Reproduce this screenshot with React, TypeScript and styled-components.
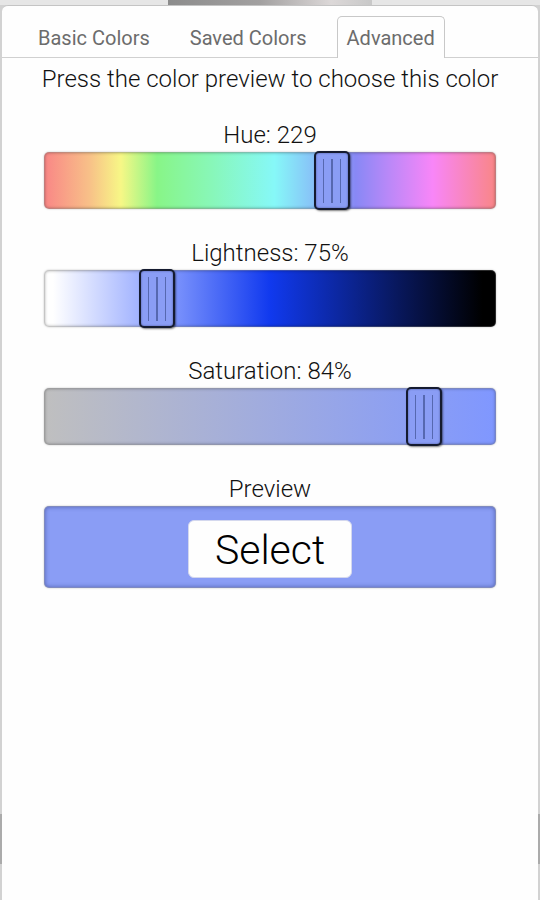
import React, { useState } from "react";
import styled, { createGlobalStyle, css } from "styled-components";

const GlobalStyle = createGlobalStyle`
  * { box-sizing: border-box; }
  body {
    margin: 0;
    font-family: Roboto, "Liberation Sans", sans-serif;
    color: #111;
    background: #e6e6e6;
  }
`;

const Backdrop = styled.div`
  min-height: 100vh;
  display: flex;
  padding: 5px 2px 0;
  background:
    linear-gradient(90deg, #8c8c8c, #a2a0a0 45%, #dcd8d8 80%, #c8c8c8) 50% 0 / 204px 6px no-repeat,
    linear-gradient(#ababab, #ababab) 0 814px / 100% 50px no-repeat,
    linear-gradient(#e6e6e6, #e6e6e6) 0 0 / 100% 5px no-repeat,
    #d2d2d2;
`;

const Dialog = styled.main`
  flex: 1;
  min-width: 0;
  background: #fefefe;
  border-top: 1px solid #c4c4c4;
  border-radius: 6px 6px 0 0;
`;

const TabList = styled.div`
  display: flex;
  align-items: flex-end;
  gap: 20px;
  height: 52px;
  padding: 0 26px;
  border-bottom: 1px solid #d0d0d0;
`;

const Tab = styled.button<{ $active?: boolean }>`
  height: 42px;
  margin: 0 0 -1px;
  padding: 0 9px;
  border: 1px solid transparent;
  border-bottom: 0;
  border-radius: 5px 5px 0 0;
  background: transparent;
  color: #6c6c6c;
  font: 400 20px/40px Roboto, "Liberation Sans", sans-serif;
  white-space: nowrap;
  cursor: pointer;
  ${(p) =>
    p.$active &&
    css`
      background: #fefefe;
      border-color: #c8c8c8;
    `}
`;

const Panel = styled.section`
  display: flex;
  flex-direction: column;
  padding: 6px 42px 0;
`;

const Hint = styled.p`
  align-self: center;
  margin: 0 0 26px;
  font-size: 24px;
  font-weight: 300;
  line-height: 30px;
  white-space: nowrap;
`;

const Field = styled.div`
  display: flex;
  flex-direction: column;
  gap: 2px;
  margin-bottom: 29px;
`;

const Label = styled.label`
  text-align: center;
  font-size: 24px;
  font-weight: 300;
  line-height: 30px;
`;

const Track = styled.div<{ $fill: string }>`
  display: flex;
  height: 57px;
  border: 1px solid rgba(110, 110, 110, 0.4);
  border-radius: 5px;
  background: ${(p) => p.$fill} border-box;
  box-shadow: inset 0 0 3px rgba(0, 0, 0, 0.3), 0 0 2px rgba(0, 0, 0, 0.25);
`;

const thumb = css`
  box-sizing: border-box;
  width: 36px;
  height: 59px;
  border: 2px solid #151b30;
  border-radius: 5px;
  background:
    linear-gradient(#5668b0, #5668b0) 7px 50% / 1px 44px no-repeat,
    linear-gradient(#5668b0, #5668b0) 15px 50% / 2px 44px no-repeat,
    linear-gradient(#5668b0, #5668b0) 24px 50% / 1px 44px no-repeat,
    var(--chosen);
  box-shadow: inset 0 0 2px rgba(20, 30, 80, 0.6), 1px 1px 2px rgba(0, 0, 0, 0.5);
`;

const Slider = styled.input<{ $reversed?: boolean }>`
  appearance: none;
  flex: 1;
  min-width: 0;
  height: 59px;
  margin: -2px -19px;
  background: transparent;
  direction: ${(p) => (p.$reversed ? "rtl" : "ltr")};
  cursor: pointer;
  &::-webkit-slider-thumb {
    appearance: none;
    ${thumb}
  }
  &::-moz-range-thumb {
    ${thumb}
  }
`;

const Swatch = styled.div`
  display: flex;
  align-items: center;
  justify-content: center;
  height: 82px;
  padding-top: 4px;
  border: 1px solid rgba(110, 110, 110, 0.4);
  border-radius: 5px;
  background: var(--chosen);
  box-shadow: inset 0 0 4px rgba(30, 40, 110, 0.5), 0 0 2px rgba(0, 0, 0, 0.25);
`;

const SelectButton = styled.button`
  height: 58px;
  padding: 2px 26px 0;
  border: 1px solid #d4d8ee;
  border-radius: 6px;
  background: #fefefe;
  color: #000;
  font: 300 41px/54px Roboto, "Liberation Sans", sans-serif;
  cursor: pointer;
`;

const Caption = styled(Label).attrs({ as: "div" })``;

const HUES =
  "linear-gradient(90deg, #f98686, #f8c088 10%, #f7f786 17%, #88f587 25%, #88f7b8 37%, #86f8f8 51%, #88b8f8 61%, #8888f5 69%, #b888f8 76%, #f886f8 86%, #f98686)";

const TABS = ["Basic Colors", "Saved Colors", "Advanced"];

export default function App() {
  const [tab, setTab] = useState("Advanced");
  const [hue, setHue] = useState(229);
  const [lightness, setLightness] = useState(75);
  const [saturation, setSaturation] = useState(84);
  const chosen = `hsl(${hue} ${saturation}% ${lightness}%)`;
  const shades = `linear-gradient(90deg, #fff 2%, hsl(${hue} 100% 78%) 25%, hsl(${hue} 87% 50%) 50%, hsl(${hue} 84% 20%) 78%, #000 97%)`;
  const tones = `linear-gradient(90deg, hsl(${hue} 0% ${lightness}%), hsl(${hue} 100% ${lightness}%))`;

  return (
    <>
      <GlobalStyle />
      <Backdrop style={{ "--chosen": chosen } as React.CSSProperties}>
        <Dialog>
          <TabList role="tablist">
            {TABS.map((name) => (
              <Tab
                key={name}
                type="button"
                role="tab"
                aria-selected={tab === name}
                $active={tab === name}
                onClick={() => setTab(name)}
              >
                {name}
              </Tab>
            ))}
          </TabList>
          <Panel>
            <Hint>Press the color preview to choose this color</Hint>
            <Field>
              <Label htmlFor="hue">Hue: {hue}</Label>
              <Track $fill={HUES}>
                <Slider id="hue" type="range" min={0} max={360} value={hue}
                  onChange={(e) => setHue(Number(e.target.value))} />
              </Track>
            </Field>
            <Field>
              <Label htmlFor="lightness">Lightness: {lightness}%</Label>
              <Track $fill={shades}>
                <Slider id="lightness" type="range" min={0} max={100} value={lightness} $reversed
                  onChange={(e) => setLightness(Number(e.target.value))} />
              </Track>
            </Field>
            <Field>
              <Label htmlFor="saturation">Saturation: {saturation}%</Label>
              <Track $fill={tones}>
                <Slider id="saturation" type="range" min={0} max={100} value={saturation}
                  onChange={(e) => setSaturation(Number(e.target.value))} />
              </Track>
            </Field>
            <Field>
              <Caption>Preview</Caption>
              <Swatch>
                <SelectButton type="button">Select</SelectButton>
              </Swatch>
            </Field>
          </Panel>
        </Dialog>
      </Backdrop>
    </>
  );
}
